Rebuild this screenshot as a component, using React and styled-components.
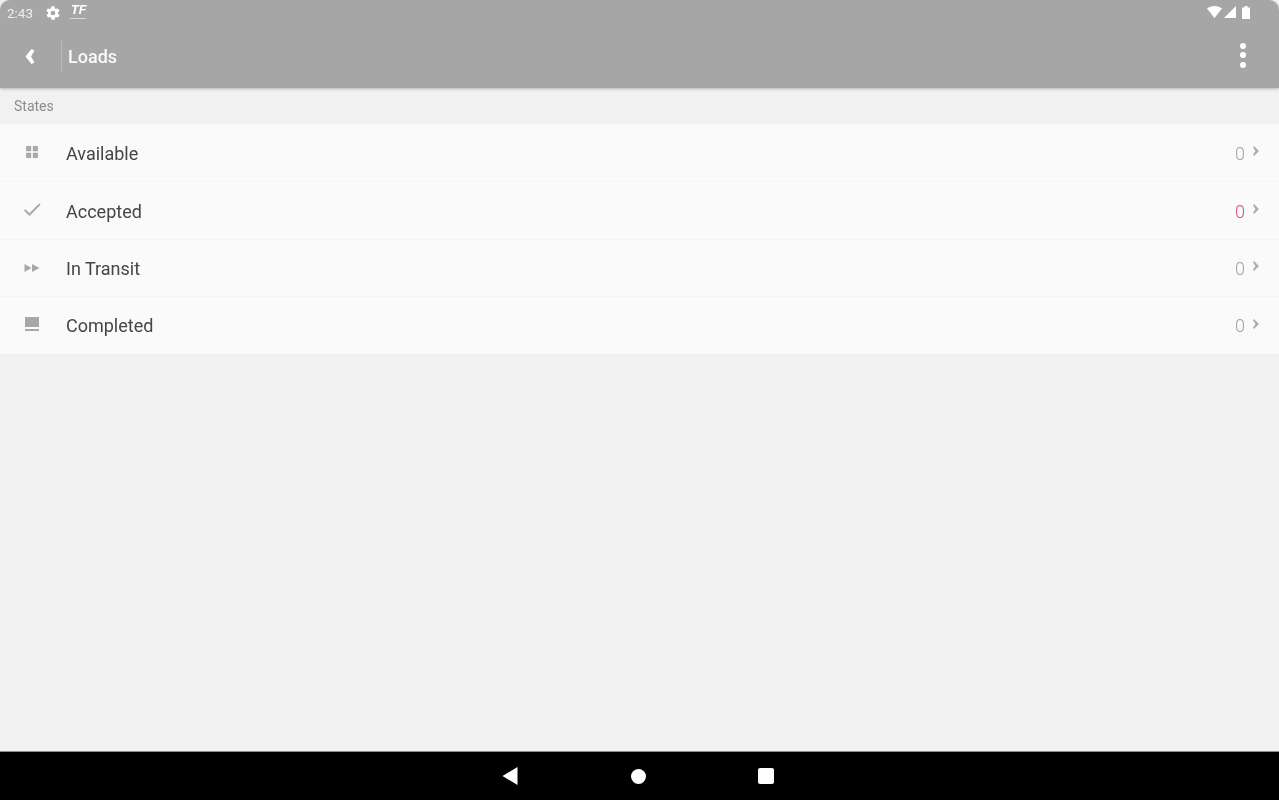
import styled, { createGlobalStyle } from "styled-components";

const GlobalStyle = createGlobalStyle`
    html, body {
        margin: 0;
        padding: 0;
        height: 100%;
        background: #fff;
    }
    #root {
        height: 100%;
    }
`;

const Screen = styled.div`
    height: 800px;
    display: flex;
    flex-direction: column;
    overflow: hidden;
    background: #f1f1f1;
    font-family: Roboto, "Liberation Sans", sans-serif;
    filter: blur(0.35px);
`;
const Header = styled.header`
    height: 88px;
    flex: none;
    display: flex;
    flex-direction: column;
    background: #a6a6a6;
    border-radius: 10px 10px 0 0;
    box-shadow: 0 1px 3px rgba(0, 0, 0, 0.25);
    color: #fff;
`;
const StatusBar = styled.div`
    height: 25px;
    flex: none;
    display: flex;
    align-items: center;
    padding: 0 28px 0 7px;
`;
const Clock = styled.span`
    font-size: 13.5px;
    color: #eee;
    margin-right: 12px;
`;
const TfBadge = styled.span`
    font-family: "Liberation Sans", sans-serif;
    font-weight: bold;
    font-style: italic;
    font-size: 12.5px;
    line-height: 9px;
    margin: 0 0 0 9px;
    padding: 0 0 3px 1px;
    border-bottom: 1px solid #d8d8d8;
`;
const StatusRight = styled.div`
    margin: -1px 0 0 auto;
    display: flex;
    align-items: center;
    gap: 2px;
`;
const Battery = styled.svg`
    width: 10px;
    height: 13px;
    margin-left: 3px;
    fill: #fff;
`;
const Toolbar = styled.div`
    flex: 1;
    display: flex;
    align-items: center;
    padding: 0 33px 0 25px;
    margin-top: -1px;
`;
const BackButton = styled.div`
    width: 36px;
    height: 32px;
    flex: none;
    display: flex;
    align-items: center;
    border-right: 1px solid #b9b9b9;
`;
const Title = styled.h1`
    margin: 0 0 0 6px;
    font-size: 18px;
    font-weight: 500;
    color: #fafafa;
`;
const MenuDots = styled.div`
    margin-left: auto;
    display: flex;
    flex-direction: column;
    gap: 3.5px;
    margin-top: -2px;
`;
const Dot = styled.span`
    width: 6px;
    height: 6px;
    border-radius: 50%;
    background: #fff;
`;
const SectionLabel = styled.div`
    height: 36px;
    flex: none;
    display: flex;
    align-items: center;
    padding-left: 14px;
    font-size: 14px;
    color: #8c8c8c;
`;
const List = styled.div`
    flex: none;
    display: flex;
    flex-direction: column;
`;
const Row = styled.div`
    height: 57.4px;
    box-sizing: border-box;
    display: flex;
    align-items: center;
    padding: 1px 20px 0 22px;
    background: #fafafa;
    & + & {
        border-top: 1px solid #f5f5f5;
    }
`;
const RowIcon = styled.svg`
    width: 20px;
    height: 20px;
    flex: none;
    margin-top: -3px;
    fill: #a8a8a8;
`;
const RowLabel = styled.span`
    margin-left: 24px;
    font-size: 18px;
    color: #454545;
`;
const Count = styled.span`
    margin-left: auto;
    margin-right: -1px;
    font-size: 18px;
    font-weight: 300;
    color: ${(p) => (p.$alert ? "#d9536f" : "#a3a3a3")};
`;
const Chevron = styled.svg`
    width: 6px;
    height: 10px;
    flex: none;
    margin: -4px 0 0 9px;
    fill: #adadad;
`;
const Spacer = styled.div`
    flex: 1;
`;
const NavBar = styled.nav`
    height: 49px;
    flex: none;
    display: flex;
    align-items: center;
    justify-content: center;
    gap: 113px;
    padding: 0 4px 0 0;
    background: #000;
    border-top: 1px solid #8a8a8a;
    box-sizing: border-box;
`;
const NavBack = styled.svg`
    width: 16px;
    height: 18px;
    fill: #fff;
`;
const NavHome = styled.span`
    width: 15px;
    height: 15px;
    border-radius: 50%;
    background: #fff;
`;
const NavRecent = styled.span`
    width: 16px;
    height: 16px;
    margin-left: -1px;
    border-radius: 2px;
    background: #fff;
`;

const rows = [
    {
        label: "Available",
        icon: <path d="M3 3h6v6H3zM11 3h6v6h-6zM3 11h6v6H3zM11 11h6v6h-6z" transform="translate(1.6 1.6) scale(.84)" />,
    },
    {
        label: "Accepted",
        alert: true,
        icon: <path d="M7.4 13.2 3.4 9.200 2 10.600l5.400 5.400L18.600 4.800l-1.400-1.400z" />,
    },
    {
        label: "In Transit",
        icon: <path d="M2.500 7v8l7-4zM10 7v8l7.500-4z" />,
    },
    {
        label: "Completed",
        icon: <path d="M3 3h14v10H3zM3 15h14v2H3z" />,
    },
];

export default function App() {
    return (
        <Screen>
            <GlobalStyle />
            <Header>
                <StatusBar>
                    <Clock>2:43</Clock>
                    <svg width="16" height="16" viewBox="0 0 24 24" fill="#fff">
                        <path d="M19.4 13a7.5 7.5 0 0 0 0-2l2.1-1.6a.5.5 0 0 0 .1-.6l-2-3.5a.5.5 0 0 0-.6-.2l-2.5 1a7.3 7.3 0 0 0-1.7-1l-.4-2.6a.5.5 0 0 0-.5-.5h-4a.5.5 0 0 0-.5.4l-.4 2.7a7.7 7.7 0 0 0-1.7 1l-2.5-1a.5.5 0 0 0-.6.2l-2 3.5a.5.5 0 0 0 .1.6L4.6 11a7.9 7.9 0 0 0 0 2l-2.1 1.6a.5.5 0 0 0-.1.6l2 3.5c.1.2.4.3.6.2l2.5-1c.5.4 1.1.7 1.7 1l.4 2.6c0 .3.2.5.5.5h4c.3 0 .5-.2.5-.4l.4-2.7a7.7 7.7 0 0 0 1.7-1l2.5 1c.2.1.5 0 .6-.2l2-3.5a.5.5 0 0 0-.1-.6zM12 15.5a3.5 3.5 0 1 1 0-7 3.5 3.5 0 0 1 0 7z" />
                    </svg>
                    <TfBadge>TF</TfBadge>
                    <StatusRight>
                        <svg width="15" height="12" viewBox="0 0 15 12" fill="#fff">
                            <path d="M0 2.5C2 .9 4.6 0 7.5 0S13 .9 15 2.5L7.5 12z" />
                        </svg>
                        <svg width="12" height="12" viewBox="0 0 12 12" fill="#fff">
                            <path d="M12 0v12H0z" />
                        </svg>
                        <Battery viewBox="0 0 10 13">
                            <path d="M1 1.500h2.500V0h3v1.500H9V13H1z" />
                        </Battery>
                    </StatusRight>
                </StatusBar>
                <Toolbar>
                    <BackButton>
                        <svg width="10" height="15" viewBox="0 0 10 15" fill="#fff">
                            <path d="M6.500 0 9.500 1.500 6 7.500l3.500 6L6.500 15 .5 7.500z" />
                        </svg>
                    </BackButton>
                    <Title>Loads</Title>
                    <MenuDots>
                        <Dot />
                        <Dot />
                        <Dot />
                    </MenuDots>
                </Toolbar>
            </Header>
            <SectionLabel>States</SectionLabel>
            <List>
                {rows.map((row) => (
                    <Row key={row.label}>
                        <RowIcon viewBox="0 0 20 20">{row.icon}</RowIcon>
                        <RowLabel>{row.label}</RowLabel>
                        <Count $alert={row.alert}>0</Count>
                        <Chevron viewBox="0 0 6 10">
                            <path d="M1 0 6 5 1 10 0 8.500 2.500 5 0 1.500z" />
                        </Chevron>
                    </Row>
                ))}
            </List>
            <Spacer />
            <NavBar>
                <NavBack viewBox="0 0 16 18">
                    <path d="M15.500 0v18L.5 9z" />
                </NavBack>
                <NavHome />
                <NavRecent />
            </NavBar>
        </Screen>
    );
}
